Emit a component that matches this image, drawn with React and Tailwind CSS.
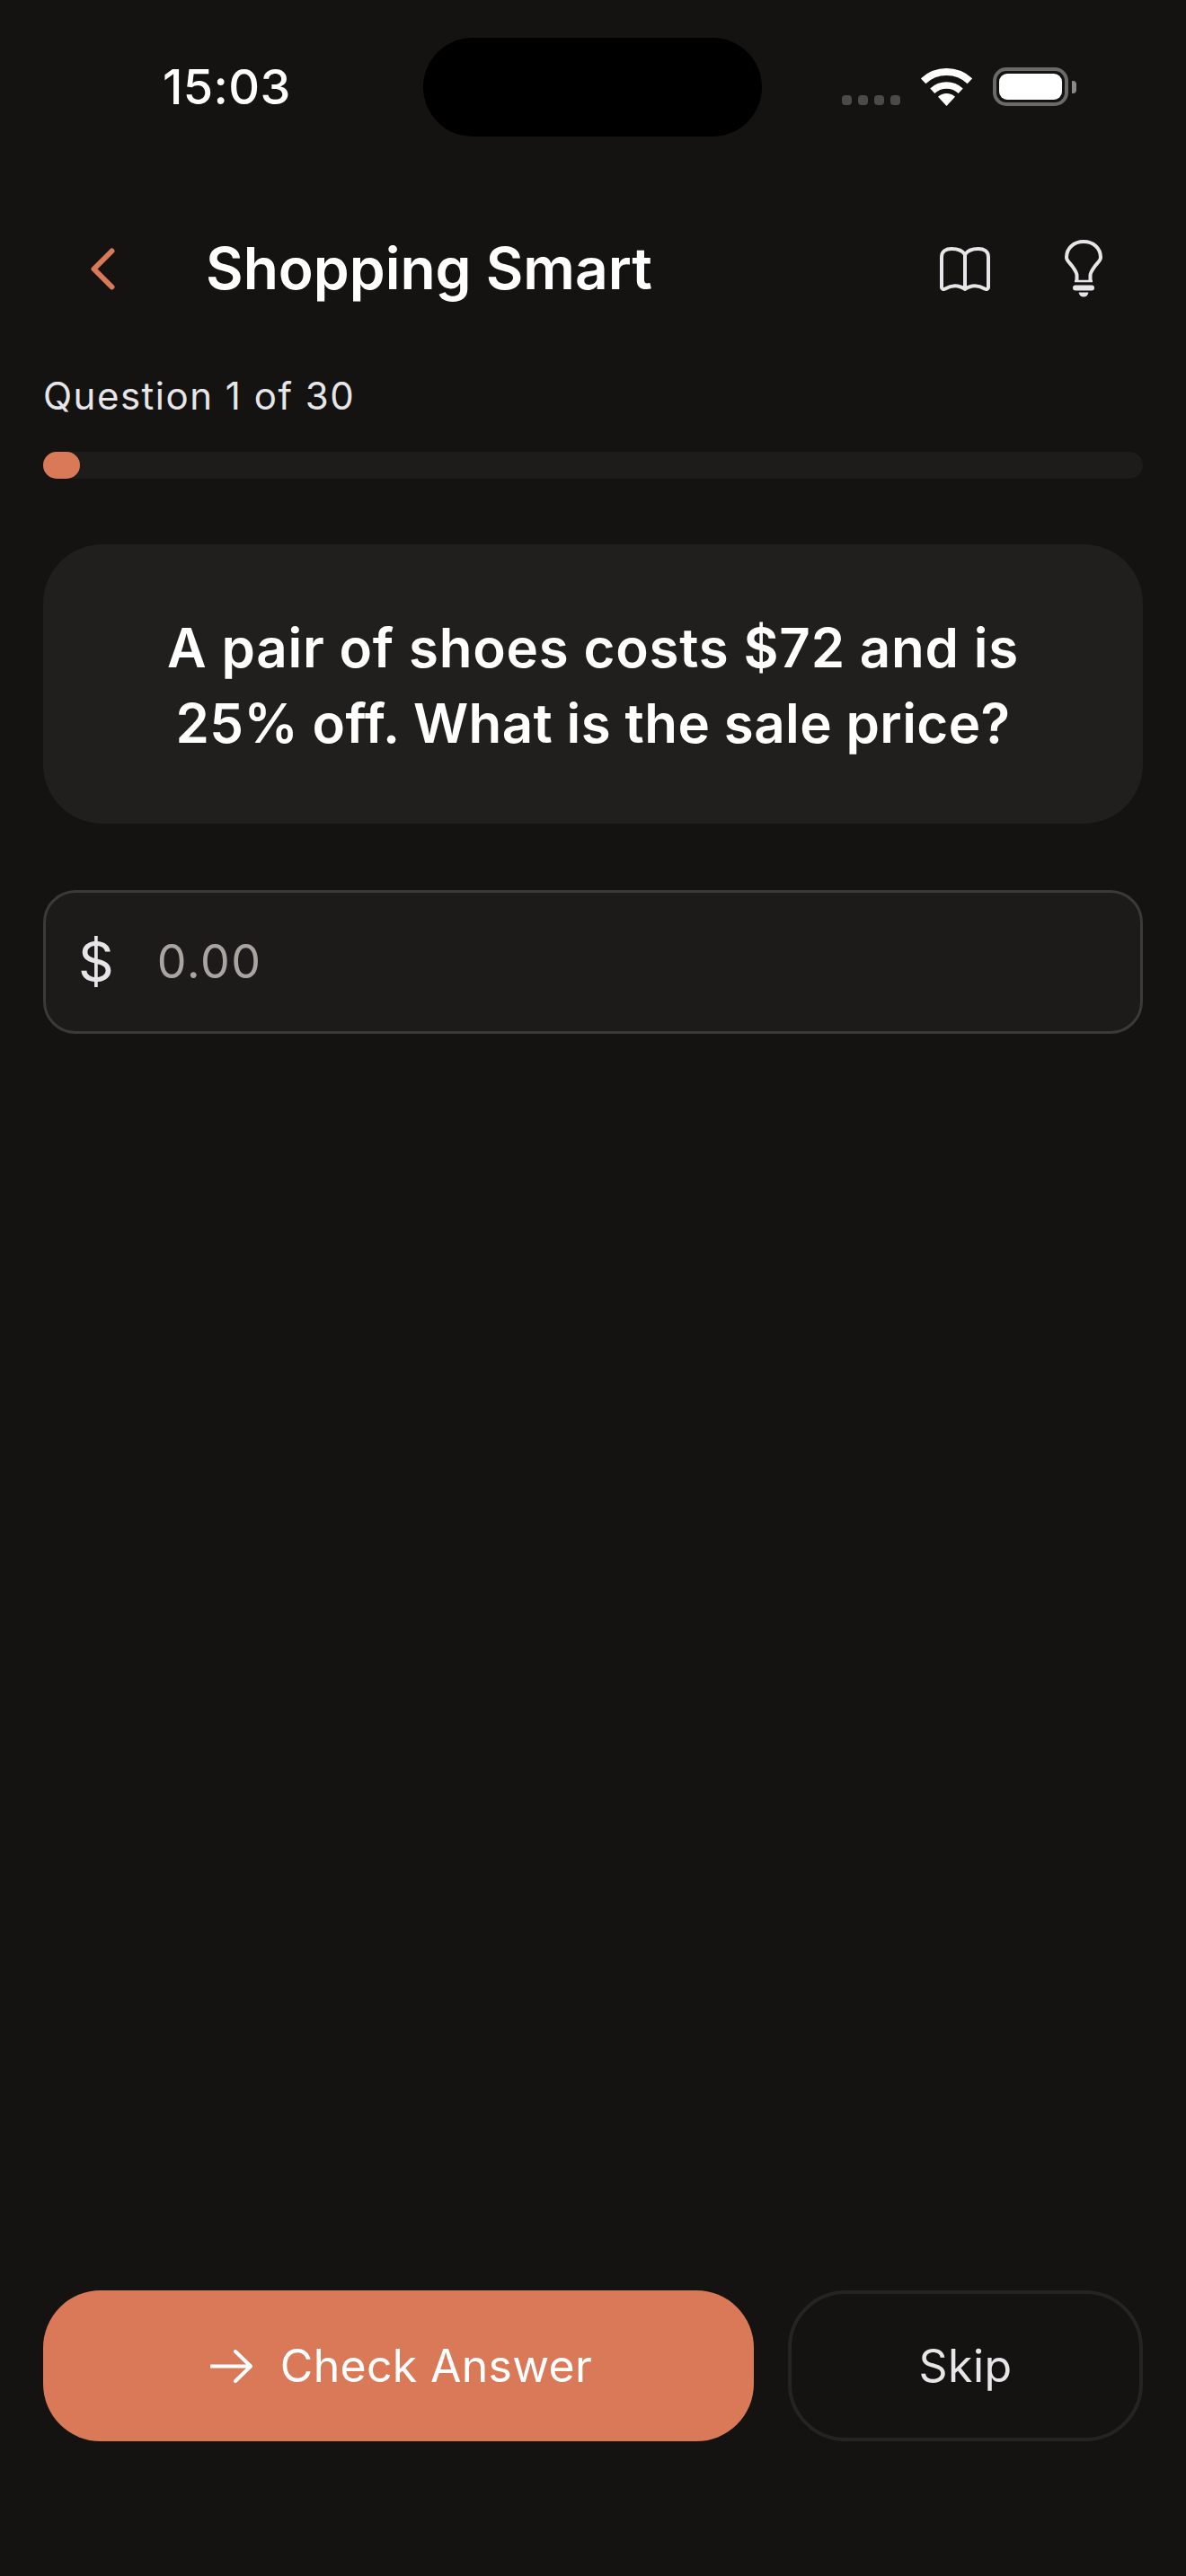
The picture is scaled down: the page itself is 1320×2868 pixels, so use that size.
export default function App() {
  return (
    <div className="w-[1320px] h-[2868px] bg-[#141312] flex flex-col font-['Inter',sans-serif] text-white overflow-hidden">
      {/* Status bar */}
      <div className="flex h-[152px] pt-[42px] shrink-0">
        <div className="w-[471px] h-[110px] flex items-center pl-[181px]">
          <span className="text-[54px] leading-[60px] font-medium tracking-[0.4px]">15:03</span>
        </div>
        <div className="w-[377px] h-[110px] rounded-[55px] bg-black" />
        <div className="flex items-end h-[76px] pl-[89px]">
          <div className="flex gap-[7px] mb-[1px]">
            <div className="w-[11px] h-[11px] rounded-[4px] bg-[#4a4a48]" />
            <div className="w-[11px] h-[11px] rounded-[4px] bg-[#4a4a48]" />
            <div className="w-[11px] h-[11px] rounded-[4px] bg-[#4a4a48]" />
            <div className="w-[11px] h-[11px] rounded-[4px] bg-[#4a4a48]" />
          </div>
          <svg className="ml-[23px]" width="57" height="42" viewBox="0 0 57 42" fill="none">
            <path d="M2.6 14.2A38 38 0 0 1 54.4 14.2" stroke="#fff" strokeWidth="8" />
            <path d="M12.8 25.2A23 23 0 0 1 44.2 25.2" stroke="#fff" strokeWidth="7.5" />
            <path d="M28.5 42L19 31.8A14 14 0 0 1 38 31.8Z" fill="#fff" />
          </svg>
          <div className="ml-[23px] flex items-center">
            <div className="w-[84px] h-[43px] rounded-[15px] border-[4px] border-[#6a6a68] p-[3px]">
              <div className="w-full h-full rounded-[9px] bg-white" />
            </div>
            <div className="ml-[4px] w-[5px] h-[14px] rounded-r-[4px] bg-[#8a8a88]" />
          </div>
        </div>
      </div>

      {/* Header */}
      <div className="flex items-center h-[70px] mt-[112px] shrink-0">
        <svg className="ml-[101px]" width="27" height="47" viewBox="0 0 27 47" fill="none">
          <path d="M23.5 3.5L3.5 23.5L23.5 43.5" stroke="#DA7958" strokeWidth="6" strokeLinecap="round" strokeLinejoin="round" />
        </svg>
        <h1 className="ml-[101px] text-[64px] leading-[70px] font-semibold tracking-[0px] text-white">Shopping Smart</h1>
        <svg className="ml-auto" width="56" height="49" viewBox="0 0 56 49" fill="none">
          <path d="M28 8.5C25 3.5 20 2 13 2C7 2 2 4.5 2 11V45C2 47 4 47.5 6 46.5C11 43.5 15 42.5 20 43.5C23 44.2 26 45.5 28 47C30 45.5 33 44.2 36 43.5C41 42.5 45 43.5 50 46.5C52 47.5 54 47 54 45V11C54 4.5 49 2 43 2C36 2 31 3.5 28 8.5ZM28 8.5V47" stroke="#E6E5E8" strokeWidth="4" strokeLinejoin="round" strokeLinecap="round" />
        </svg>
        <svg className="ml-[83px] mr-[93px]" width="42" height="64" viewBox="0 0 42 64" fill="none">
          <path d="M13.5 46V39.5C13.5 36.5 11.5 34 8.5 29.5C5 25 2 23 2 19.5C2 9.5 10 2 21 2C32 2 40 9.5 40 19.5C40 23 37 25 33.5 29.5C30.5 34 28.5 36.5 28.5 39.5V46" stroke="#E6E5E8" strokeWidth="4" strokeLinejoin="round" />
          <path d="M11 46H31" stroke="#E6E5E8" strokeWidth="2.5" />
          <path d="M12 53.5H30" stroke="#E6E5E8" strokeWidth="6" strokeLinecap="round" />
          <path d="M15.5 58.5H26.5C26 61.5 24 63.5 21 63.5C18 63.5 16 61.5 15.5 58.5Z" fill="#E6E5E8" />
        </svg>
      </div>

      {/* Content */}
      <div className="flex flex-col flex-1 px-[48px]">
        <p className="mt-[82px] text-[42px] leading-[50px] text-[#E6E5E8] tracking-[1.5px]">Question 1 of 30</p>
        <div className="mt-[37px] h-[30px] rounded-[15px] bg-[#1D1C1B]">
          <div className="w-[41px] h-full rounded-[15px] bg-[#DA7958]" />
        </div>

        <div className="mt-[73px] h-[311px] rounded-[66px] bg-[#201F1D] flex items-center justify-center pt-[3px]">
          <p className="text-[60px] leading-[84px] font-semibold text-center w-[1100px] tracking-[0.8px]">
            A pair of shoes costs $72 and is<br /><span className="tracking-[0.4px]">25% off. What is the sale price?</span>
          </p>
        </div>

        <div className="mt-[74px] h-[160px] rounded-[36px] border-[3px] border-[#3A3A38] bg-[#1C1B1A] flex items-center pl-[36px]">
          <span className="text-[62px] leading-[64px] text-[#E6E5E8]">$</span>
          <span className="ml-[48px] text-[52px] leading-[60px] text-[#A8A5A0] tracking-[1.5px]">0.00</span>
        </div>

        <div className="mt-auto mb-[150px] flex gap-[38px]">
          <div className="w-[791px] h-[168px] rounded-[64px] bg-[#DA7958] flex items-center justify-center gap-[31px] pl-[6px]">
            <svg width="47" height="37" viewBox="0 0 47 37" fill="none">
              <path d="M1 18.5H45M28 2L45 18.5L28 35" stroke="#fff" strokeWidth="4" strokeLinecap="round" strokeLinejoin="round" />
            </svg>
            <span className="text-[50px] leading-[60px] tracking-[0.3px]">Check Answer</span>
          </div>
          <div className="w-[395px] h-[168px] rounded-[64px] border-[4px] border-[#242423] flex items-center justify-center">
            <span className="text-[50px] leading-[60px] text-[#E6E5E8] tracking-[0.5px]">Skip</span>
          </div>
        </div>
      </div>
    </div>
  );
}
